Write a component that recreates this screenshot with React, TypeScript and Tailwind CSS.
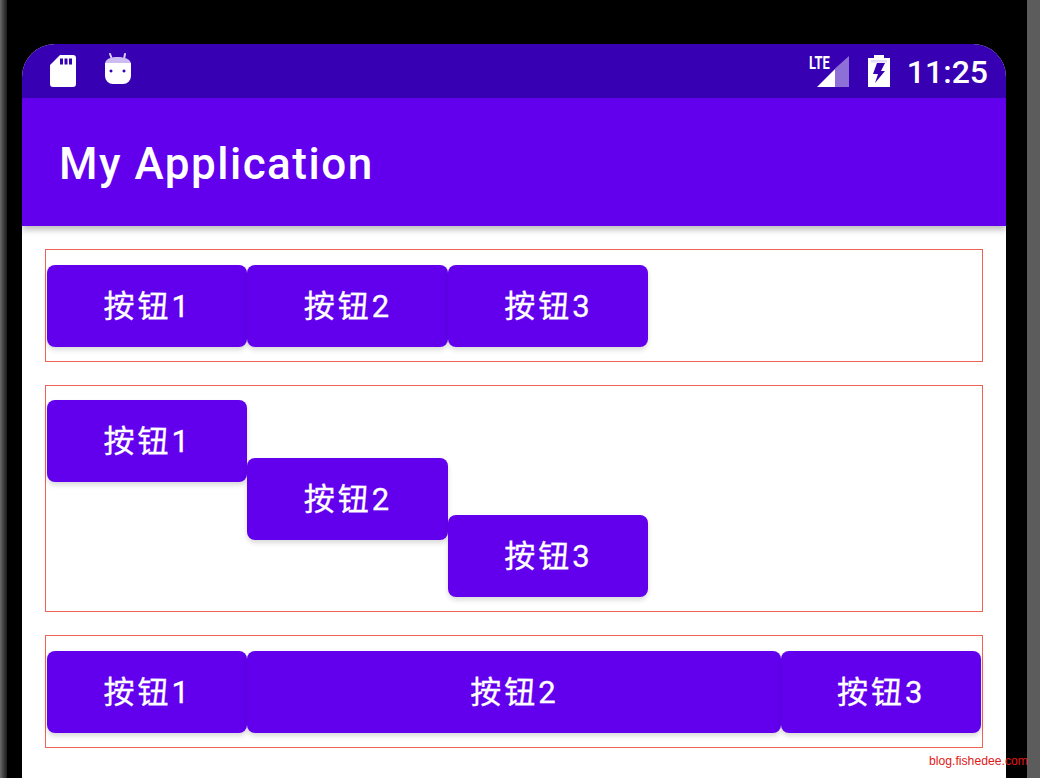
const btn =
  'w-[200.4px] h-[82px] shrink-0 flex items-center justify-center pt-[2px] pl-[1px] rounded-[8px] bg-[#6200ee] text-white text-[31px] tracking-[3px] [-webkit-text-stroke:0.3px_white] shadow-[0_3px_5px_rgba(0,0,0,0.15)]';

function Button({ label, className = '' }: { label: string; className?: string }) {
  return <div className={`${btn} ${className}`}>{label}</div>;
}

export default function App() {
  return (
    <div
      className="relative w-[1040px] h-[778px] overflow-hidden bg-black flex"
      style={{ fontFamily: 'Roboto, "Noto Sans CJK SC", sans-serif' }}
    >
      <div className="w-[7px] bg-gradient-to-r from-[#6a6a6a] to-[#1c1c1c]" />
      <div className="w-[15px]" />

      {/* Screen */}
      <div className="w-[984px] mt-[44px] rounded-t-[33px] overflow-hidden bg-white flex flex-col">
        {/* Status bar */}
        <div className="h-[54px] bg-[#3700b3] flex items-start pl-[28px] pr-[18px] shrink-0">
          <svg width="26" height="32" viewBox="0 0 26 32" className="mt-[11px]">
            <path
              fill="#fff"
              fillRule="evenodd"
              d="M10 0H23a3 3 0 0 1 3 3V29a3 3 0 0 1-3 3H3a3 3 0 0 1-3-3V10ZM10 3.500V9.500H13V3.500ZM14.500 3.500V9.500H17.500V3.500ZM19 3.500V9.500H22V3.500Z"
            />
          </svg>
          <svg width="28" height="32" viewBox="0 0 28 32" className="ml-[28px] mt-[9px]">
            <path d="M6 1 8 6M21 1 20 6" stroke="#d8ccf5" strokeWidth="2" strokeLinecap="round" />
            <path fill="#cdbcf2" d="M1 11C1 6.500 6 4 13.500 4S27 6.500 27 11Z" />
            <path
              fill="#fff"
              fillRule="evenodd"
              d="M1 10H27V23a8 8 0 0 1-8 8H9a8 8 0 0 1-8-8ZM7 16.500a1.500 1.500 0 1 0 .01 0ZM20 16.500a1.500 1.500 0 1 0 .01 0Z"
            />
          </svg>

          <div className="ml-auto flex items-start">
            <div className="relative w-[42px] h-[33px] mt-[11px]">
              <span className="absolute left-[2px] -top-[2px] text-white text-[19px] font-bold leading-[20px] scale-x-[0.68] origin-left">
                LTE
              </span>
              <svg width="32" height="31" viewBox="0 0 32 31" className="absolute left-[10px] top-[1px]">
                <path fill="#8e6fd8" d="M32 0V31H18V12.500Z" />
                <path fill="#fff" d="M18 13V31H0Z" />
              </svg>
            </div>
            <svg width="22" height="32" viewBox="0 0 22 32" className="ml-[19px] mt-[11px]">
              <path
                fill="#fff"
                fillRule="evenodd"
                d="M6 0H16V3H22V32H0V3H6ZM9 8H17L13 16H17L7 28 10 19H5Z"
              />
              <rect x="3" y="5" width="16" height="2.500" fill="#e6dcf8" />
            </svg>
            <span className="ml-[17px] mt-[12px] text-white text-[32px] font-medium leading-none">11:25</span>
          </div>
        </div>

        {/* App bar */}
        <div className="h-[128px] bg-[#6200ee] flex items-center pl-[37px] pt-[4px] shrink-0 shadow-[0_4px_6px_rgba(0,0,0,0.25)] z-10">
          <span className="text-white text-[44px] font-medium leading-none tracking-[1.5px]">My Application</span>
        </div>

        {/* Content */}
        <div className="flex flex-col gap-[23px] pt-[23px] pl-[23px] pr-[23px]">
          <div className="h-[113px] border border-[#ef6256] flex items-start pt-[15px] pl-[1px]">
            <Button label="按钮1" />
            <Button label="按钮2" />
            <Button label="按钮3" />
          </div>

          <div className="h-[227px] border border-[#ef6256] flex items-start pt-[14px] pl-[1px]">
            <Button label="按钮1" />
            <Button label="按钮2" className="mt-[58px]" />
            <Button label="按钮3" className="mt-[115px]" />
          </div>

          <div className="h-[113px] border border-[#ef6256] flex items-start pt-[15px] px-[1px]">
            <Button label="按钮1" />
            <Button label="按钮2" className="flex-1" />
            <Button label="按钮3" />
          </div>
        </div>
      </div>

      <div className="w-[21px]" />
      <div className="w-[13px] bg-[#5c5c5c]" />

      {/* Watermark */}
      <span
        className="absolute left-[929px] top-[753px] text-[12.2px] leading-[16px] text-[#e01818]"
        style={{ fontFamily: '"Liberation Sans", sans-serif' }}
      >
        blog.fishedee.com
      </span>
    </div>
  );
}
